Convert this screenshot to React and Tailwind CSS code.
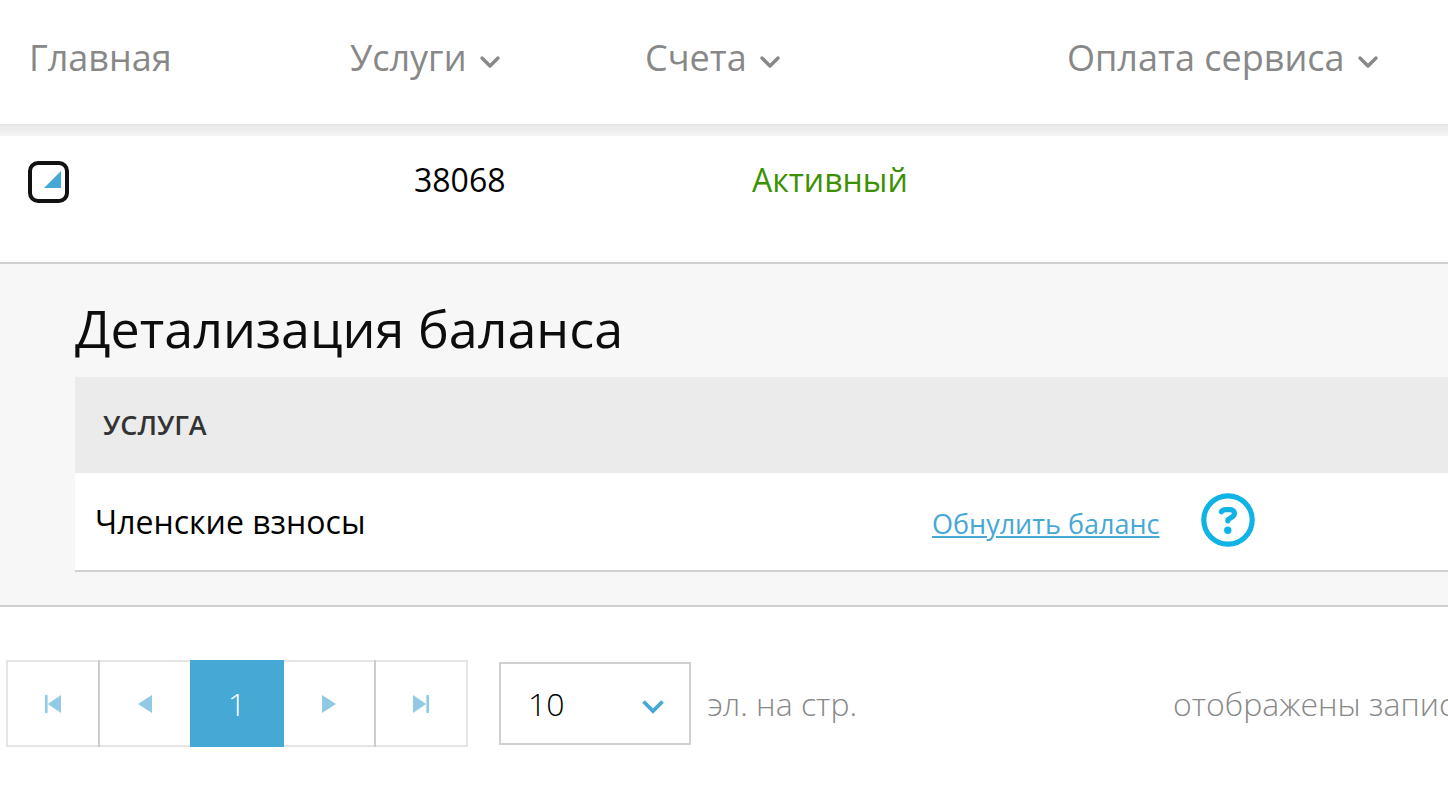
import React, { useState } from "react";

const navItems = [
    { title: "Главная", hasMenu: false },
    { title: "Услуги", hasMenu: true },
    { title: "Счета", hasMenu: true },
    { title: "Оплата сервиса", hasMenu: true },
];

const Chevron = ({ className }) => (
    <svg viewBox="0 0 22 14" fill="none" stroke="currentColor" className={className}>
        <path strokeLinecap="round" strokeLinejoin="round" strokeWidth="3.4" d="M3 3l8 8 8-8"></path>
    </svg>
);

const Header = () => {
    return (
        <header>
            <nav className="grid h-31 grid-cols-[321px_295px_422px_1fr] items-center pb-2 pl-[29px] text-4xl text-[#888]">
                {navItems.map((item) => (
                    <a key={item.title} href="#" className="flex items-center gap-3">
                        {item.title}
                        {item.hasMenu && <Chevron className="mt-2 h-3.5 w-[22px]" />}
                    </a>
                ))}
            </nav>
            <div className="h-3 bg-linear-to-b from-[#e6e6e6] via-[#ededed] to-[#f6f6f6]"></div>
        </header>
    );
};

const BalanceDetails = () => {
    return (
        <div className="border-y-2 border-[#d0d0d0] bg-[#f7f7f7] pt-8 pb-[33px] pl-[75px]">
            <h2 className="mb-1 h-[77px] text-[52px] leading-16 text-[#0d0d0d]">Детализация баланса</h2>
            <table className="w-full table-fixed text-left">
                <thead className="bg-[#ebebeb]">
                    <tr className="h-24">
                        <th className="w-[857px] pl-7 text-[27px] font-semibold text-[#333]">УСЛУГА</th>
                        <th></th>
                    </tr>
                </thead>
                <tbody className="bg-white">
                    <tr className="h-[98px] border-b-2 border-[#d0d0d0]">
                        <td className="pl-5 text-[32px]">Членские взносы</td>
                        <td className="pb-1">
                            <div className="flex items-center gap-[42px]">
                                <a href="#" className="pt-2.5 text-[27px] text-[#45a8d5] underline">Обнулить баланс</a>
                                <button type="button" aria-label="Справка" className="text-[#0fb3e6]">
                                    <svg viewBox="0 0 54 54" fill="none" stroke="currentColor" className="size-[54px]">
                                        <circle cx="27" cy="27" r="24.2" strokeWidth="5.2"></circle>
                                        <path strokeLinecap="round" strokeLinejoin="round" strokeWidth="5.2" d="M20.400 18.800c.8-1.500 2.200-2.200 4.400-2.200h4.400c2.600 0 4.200 1.400 4.200 3.700 0 1.800-1 3-2.700 4l-3.800 2.300v1.200"></path>
                                        <circle cx="26.800" cy="37.300" r="3.700" fill="currentColor" stroke="none"></circle>
                                    </svg>
                                </button>
                            </div>
                        </td>
                    </tr>
                </tbody>
            </table>
        </div>
    );
};

const PagerButton = ({ label, children }) => (
    <button
        type="button"
        aria-label={label}
        className="-mr-0.5 flex h-[87px] w-[94px] items-center justify-center border-2 border-black/10 text-[#90cae4]">
        <svg viewBox="0 0 16 18" fill="currentColor" className="h-[18px] w-4">
            {children}
        </svg>
    </button>
);

const Pager = () => {
    const [pageSize, setPageSize] = useState("10");

    return (
        <footer className="flex items-center overflow-hidden pt-[53px] pb-12 pl-1.5 text-[32px] font-light text-[#888]">
            <div className="flex shrink-0">
                <PagerButton label="Первая страница">
                    <path d="M0 0h2.600v18H0zM16 0v18L2.800 9z"></path>
                </PagerButton>
                <PagerButton label="Предыдущая страница">
                    <path d="M15 0v18L1 9z"></path>
                </PagerButton>
                <button type="button" className="relative -mr-0.5 h-[87px] w-[94px] bg-[#45a8d5] text-white">1</button>
                <PagerButton label="Следующая страница">
                    <path d="M1 0v18l14-9z"></path>
                </PagerButton>
                <PagerButton label="Последняя страница">
                    <path d="M13.400 0H16v18h-2.600zM0 0v18l13.200-9z"></path>
                </PagerButton>
            </div>
            <label className="ml-[33px] flex shrink-0 items-center gap-4">
                <span className="relative">
                    <select
                        value={pageSize}
                        onChange={(e) => setPageSize(e.target.value)}
                        className="h-[83px] w-48 appearance-none border-2 border-[#d0d0d0] bg-white pl-[27px] text-black">
                        <option>10</option>
                        <option>25</option>
                        <option>50</option>
                    </select>
                    <svg viewBox="0 0 22 14" fill="none" stroke="currentColor" className="pointer-events-none absolute top-[38px] right-[27px] h-3.5 w-[22px] text-[#45a8d5]">
                        <path strokeWidth="3.800" d="M1.500 1.500l9.500 9.500 9.500-9.500"></path>
                    </svg>
                </span>
                эл. на стр.
            </label>
            <p className="ml-auto w-[275px] shrink-0 whitespace-nowrap">отображены записи</p>
        </footer>
    );
};

const App = () => {
    const [isOpen, setIsOpen] = useState(true);

    return (
        <div className="min-h-screen overflow-hidden bg-white font-['Open_Sans','Noto_Sans',sans-serif] text-black">
            <Header />
            <table className="w-full table-fixed text-left">
                <tbody>
                    <tr className="h-[126px] align-top text-[32px]">
                        <td className="w-[414px] pt-[25px] pl-7">
                            <button
                                type="button"
                                aria-label="Детализация"
                                aria-expanded={isOpen}
                                onClick={() => setIsOpen(!isOpen)}
                                className="flex h-[42px] w-[41px] items-start rounded-[10px] border-4 border-[#111] pt-1.5 pl-3">
                                <svg viewBox="0 0 17 17" fill="#45a8d5" className="size-[17px] shrink-0">
                                    <path d="M17 0v17H0z"></path>
                                </svg>
                            </button>
                        </td>
                        <td className="w-[338px] pt-5">38068</td>
                        <td className="pt-5 text-[#3c9100]">Активный</td>
                    </tr>
                    {isOpen && (
                        <tr>
                            <td colSpan={3}>
                                <BalanceDetails />
                            </td>
                        </tr>
                    )}
                </tbody>
            </table>
            <Pager />
        </div>
    );
};

export default App;
